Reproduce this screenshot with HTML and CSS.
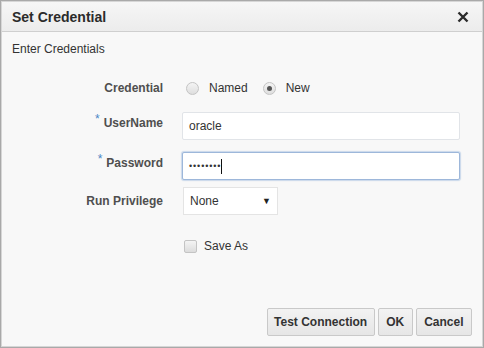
FILE: index.html
```html
<!DOCTYPE html>
<html>
<head>
<meta charset="utf-8">
<link rel="stylesheet" href="styles.css">
</head>
<body>
<div class="dialog">
  <div class="header">
    <span class="title">Set Credential</span>
    <svg class="close" width="12" height="12" viewBox="0 0 12 12"><path d="M1.5 1.5 L10.5 10.5 M10.5 1.5 L1.5 10.5" stroke="#2b2b2b" stroke-width="2.4" fill="none"/></svg>
  </div>
  <div class="body">
    <div class="intro">Enter Credentials</div>
    <div class="form">
      <div class="row r-cred">
        <div class="label">Credential</div>
        <div class="field radios">
          <span class="radio"></span><span class="opt">Named</span>
          <span class="radio on"></span><span class="opt">New</span>
        </div>
      </div>
      <div class="row r-user">
        <div class="label up"><span class="req">*</span>UserName</div>
        <div class="field"><div class="input">oracle</div></div>
      </div>
      <div class="row r-pass">
        <div class="label up"><span class="req">*</span>Password</div>
        <div class="field"><div class="input focus"><span class="dots">••••••••</span><span class="caret"></span></div></div>
      </div>
      <div class="row r-priv">
        <div class="label">Run Privilege</div>
        <div class="field"><div class="select"><span>None</span><span class="arrow">▼</span></div></div>
      </div>
      <div class="row r-save">
        <div class="label"></div>
        <div class="field check"><span class="box"></span><span class="opt">Save As</span></div>
      </div>
    </div>
    <div class="footer">
      <button class="btn wide">Test Connection</button>
      <button class="btn">OK</button>
      <button class="btn">Cancel</button>
    </div>
  </div>
</div>
</body>
</html>
```
FILE: styles.css
```css
html, body { margin: 0; padding: 0; }
body {
  width: 484px; height: 348px;
  font-family: "Liberation Sans", Arial, sans-serif;
  font-size: 12px; color: #333;
  background: #fff;
}
.dialog {
  box-sizing: border-box;
  width: 484px; height: 348px;
  border: 1px solid #a9a9a9;
  box-shadow: inset 0 0 0 1px #d6d6d6;
  background: #f8f8f8;
  display: flex; flex-direction: column;
  padding: 1px;
}
.header {
  height: 30px;
  box-sizing: border-box;
  background: linear-gradient(#f6f6f6, #ececec);
  border-bottom: 1px solid #cfcfcf;
  display: flex; align-items: center; justify-content: space-between;
  padding: 0 13px 0 10px;
}
.title { font-weight: bold; font-size: 14px; color: #2b2b2b; }
.close { display: block; }
.body { flex: 1; display: flex; flex-direction: column; padding: 0 10px 10px 10px; }
.intro { margin-top: 9px; line-height: 16px; color: #333; }
.form { display: flex; flex-direction: column; }
.row { display: flex; align-items: center; }
.label {
  width: 151px; text-align: right; font-weight: bold; color: #4f4f4f;
  flex: none;
}
.label.up { padding-bottom: 7px; }
.req { color: #4a86c5; font-weight: normal; font-size: 12px; position: relative; top: -4px; margin-right: 4px; }
.field { margin-left: 19px; flex: 1; display: flex; align-items: center; }
.r-cred { margin-top: 19px; height: 24px; }
.r-user { margin-top: 12px; }
.r-pass { margin-top: 12px; }
.r-priv { margin-top: 7px; }
.r-save { margin-top: 21px; height: 20px; }
.radio {
  width: 11px; height: 11px; border-radius: 50%;
  border: 1px solid #c4c4c4; background: linear-gradient(#f4f4f4, #dedede);
  margin-left: 4px; box-sizing: content-box; position: relative;
}
.radio.on::after {
  content: ""; position: absolute; left: 3px; top: 3px; width: 5px; height: 5px; border-radius: 50%; background: #555;
}
.opt { margin-left: 10px; margin-right: 11px; color: #333; }
.input {
  box-sizing: border-box; width: 278px; height: 28px;
  background: #fff; border: 1px solid #e1e4e8; border-radius: 2px;
  display: flex; align-items: center; padding-left: 6px; color: #333;
}
.input.focus { border-color: #9db7da; box-shadow: 0 0 1px 1px #c9d8ea; }
.dots { font-size: 9px; letter-spacing: 0.9px; color: #333; }
.caret { width: 1px; height: 15px; background: #111; margin-left: 0px; }
.select {
  box-sizing: border-box; width: 95px; height: 28px; margin-left: 1px;
  background: #fff; border: 1px solid #e4e4e4;
  display: flex; align-items: center; justify-content: space-between;
  padding: 0 6px 0 6px;
}
.arrow { font-size: 9px; color: #222; }
.check .box {
  width: 11px; height: 11px; border: 1px solid #c4c4c4; border-radius: 2px;
  background: linear-gradient(#f4f4f4, #dcdcdc); margin-left: 2px;
}
.check .opt { margin-left: 7px; }
.footer { margin-top: auto; display: flex; justify-content: flex-end; gap: 3px; }
.btn {
  font-family: "Liberation Sans", Arial, sans-serif; font-size: 12px; font-weight: bold;
  color: #333; height: 28px; padding: 0 7.5px;
  background: linear-gradient(#f3f3f3, #e6e6e6);
  border: 1px solid #c9c9c9; border-radius: 2px;
}
.btn.wide { padding: 0 6.5px; }
```
